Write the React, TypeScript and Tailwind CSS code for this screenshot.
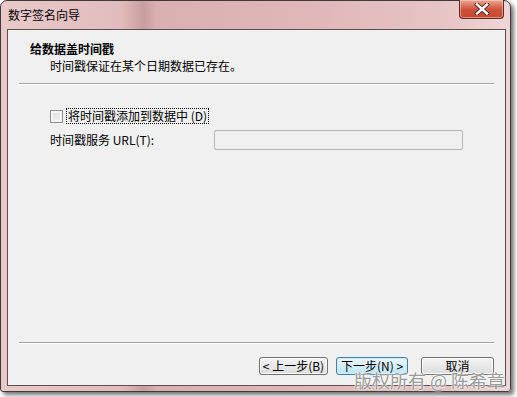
import React from "react";

const font = { fontFamily: '"Noto Sans CJK SC", "Liberation Sans", sans-serif' };

const CloseIcon = () => (
  <svg width="16" height="12" viewBox="0 0 16 12">
    <path d="M3 1.5 L13 10.5 M13 1.5 L3 10.5" stroke="#4a2a25" strokeWidth="4.2" strokeLinecap="square" />
    <path d="M3 1.5 L13 10.5 M13 1.5 L3 10.5" stroke="#ffffff" strokeWidth="2.4" strokeLinecap="square" />
  </svg>
);

const WizardButton = ({ label, focused = false, width }: { label: string; focused?: boolean; width: string }) => (
  <button
    className={
      focused
        ? `${width} h-[18px] rounded-[3px] border border-[#3c7fb1] bg-gradient-to-b from-[#eaf6fd] to-[#bfe4f8] text-[12px] leading-none text-black shadow-[inset_0_0_0_1px_#cdeefb]`
        : `${width} h-[18px] rounded-[3px] border border-[#707070] bg-gradient-to-b from-[#f4f4f4] to-[#dcdcdc] text-[12px] leading-none text-black shadow-[inset_0_0_0_1px_#fcfcfc]`
    }
  >
    {label}
  </button>
);

export default function App() {
  return (
    <div className="w-[517px] h-[397px] bg-white relative overflow-hidden" style={font}>
      <div className="w-[511px] h-[392px] rounded-t-[7px] rounded-b-[3px] border border-[#3f3a3a] shadow-[3px_3px_4px_rgba(0,0,0,0.55)] flex flex-col bg-[linear-gradient(90deg,#e9c9c9_0px,#e2bcbc_120px,#c99d9e_143px,#d9afb0_155px,#e0b6b7_300px,#e7c4c4_440px,#efd6d6_510px)]">
        {/* title bar */}
        <div className="h-[28px] flex items-start justify-between pl-[7px] pr-[6px]">
          <span className="text-[12px] leading-[16px] mt-[6px] text-black">数字签名向导</span>
          <div className="w-[45px] h-[19px] -mt-px rounded-b-[4px] border border-[#5a2b22] border-t-0 bg-gradient-to-b from-[#e9a797] via-[#d0533c] to-[#c8452b] flex items-center justify-center shadow-[inset_0_0_0_1px_rgba(255,220,210,0.5)]">
            <CloseIcon />
          </div>
        </div>

        {/* client area */}
        <div className="ml-[6px] mr-[4px] h-[357px] border border-[#5b4f4f] bg-[#f0f0f0] flex flex-col text-[12px] leading-[16px] text-black">
          <div className="pl-[22px] pt-[11px]">
            <div className="font-bold">给数据盖时间戳</div>
            <div className="pl-[20px] mt-px">时间戳保证在某个日期数据已存在。</div>
          </div>
          <div className="mx-[11px] mt-[9px] h-px bg-[#a0a0a0] border-b border-white box-content" />

          <div className="pl-[42px] mt-[23px] flex items-center">
            <div className="w-[13px] h-[13px] border border-[#8e8f8f] bg-gradient-to-br from-[#dcdcdc] to-[#f6f6f6] shadow-[inset_0_0_0_2px_#f4f4f4]" />
            <span className="ml-[3px] px-px border border-dotted border-black leading-[14px]">将时间戳添加到数据中 (D)</span>
          </div>

          <div className="pl-[42px] mt-[6px] flex items-center">
            <span className="w-[164px]">时间戳服务 URL(T):</span>
            <div className="w-[249px] h-[20px] rounded-[2px] border border-[#b4b4b4] bg-[#f0f0f0]" />
          </div>

          <div className="flex-1" />

          <div className="mx-[11px] h-px bg-[#a0a0a0] border-b border-white box-content" />
          <div className="flex justify-end items-center pr-[11px] mt-[13px] mb-[10px]">
            <WizardButton label="< 上一步(B)" width="w-[69px]" />
            <div className="w-[8px]" />
            <WizardButton label="下一步(N) >" width="w-[72px]" focused />
            <div className="w-[13px]" />
            <WizardButton label="取消" width="w-[73px]" />
          </div>
        </div>
      </div>

      {/* watermark */}
      <div className="absolute left-[354px] top-[369px] text-[18px] leading-[22px] text-[#9a9a9a] whitespace-nowrap [text-shadow:0_0_2px_#ffffff,0_0_2px_#ffffff]">
        版权所有 @ 陈希章
      </div>
    </div>
  );
}
